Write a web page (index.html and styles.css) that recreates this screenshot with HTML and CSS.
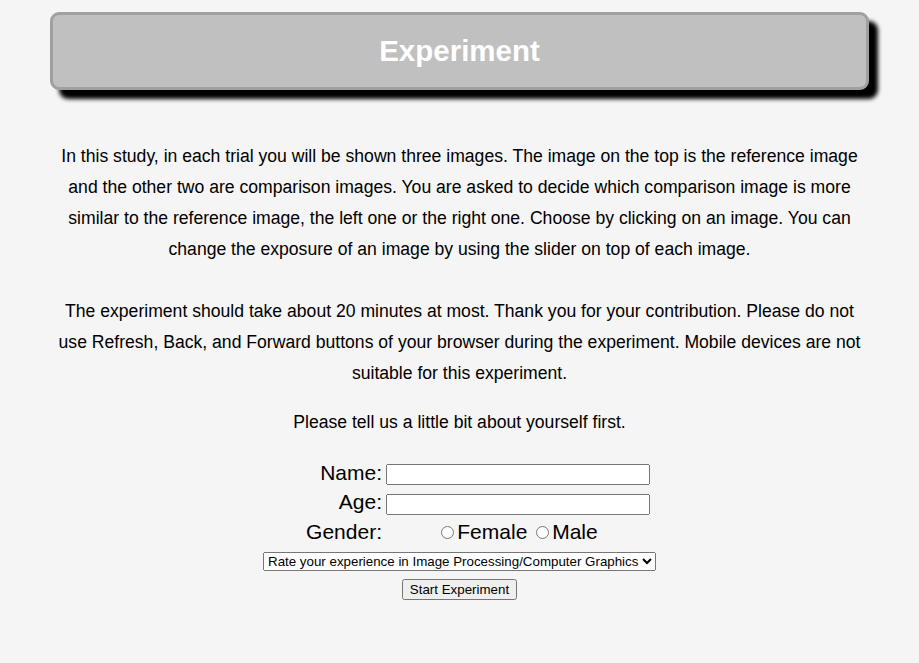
FILE: index.html
```html
<!DOCTYPE html>
<html>
<head>
<meta charset="utf-8">
<link rel="stylesheet" href="styles.css">
</head>
<body>
<div class="header"><h1 class="title">Experiment</h1></div>
<div class="content">
<p class="intro">In this study, in each trial you will be shown three images. The image on the top is the reference image and the other two are comparison images. You are asked to decide which comparison image is more similar to the reference image, the left one or the right one. Choose by clicking on an image. You can change the exposure of an image by using the slider on top of each image.<br><br>The experiment should take about 20 minutes at most. Thank you for your contribution. Please do not use Refresh, Back, and Forward buttons of your browser during the experiment. Mobile devices are not suitable for this experiment.</p>
<p class="ask">Please tell us a little bit about yourself first.</p>
<table class="form">
<tr><td class="lbl">Name:</td><td class="fld"><input type="text" class="txt"></td></tr>
<tr><td class="lbl">Age:</td><td class="fld"><input type="text" class="txt"></td></tr>
<tr><td class="lbl">Gender:</td><td class="fld center"><input type="radio" name="g" class="rad">Female <input type="radio" name="g" class="rad">Male</td></tr>
</table>
<div class="selrow"><select class="sel"><option>Rate your experience in Image Processing/Computer Graphics</option></select></div>
<div class="btnrow"><button class="btn">Start Experiment</button></div>
</div>
</body>
</html>
```
FILE: styles.css
```css
body {
  margin: 8px;
  background: #f5f5f5;
  font-family: "Liberation Sans", Arial, sans-serif;
  color: #000;
}
.header {
  width: 90%;
  margin: 4px auto 0;
  height: 72px;
  background: #c0c0c0;
  border: 3px solid #a0a0a0;
  border-radius: 9px;
  box-shadow: 9px 9px 4px #000;
  display: flex;
  align-items: center;
  justify-content: center;
}
.title {
  margin: 0;
  color: #fff;
  font-size: 29.5px;
  font-weight: bold;
}
.content {
  text-align: center;
  padding-top: 33px;
}
.intro {
  width: 90%;
  margin: 18px auto 0;
  font-size: 17.6px;
  line-height: 31px;
}
.ask {
  margin: 18px 0 0;
  font-size: 17.6px;
  line-height: 31px;
}
.form {
  margin: 19px auto 0;
  border-spacing: 2px;
  font-size: 21px;
}
.form td { padding: 1px; height: 25.5px; }
.form td.lbl { width: 113px; text-align: right; }
.fld { text-align: left; }
.center { text-align: center; line-height: 22px; }
.txt {
  width: 256px;
  height: 15px;
  margin: 0;
  font-size: 13px;
}
.rad { margin: 3px 3px 0 3px; width: 13px; height: 13px; }
.selrow { margin-top: 4px; }
.sel { font-family: "Liberation Sans", Arial, sans-serif; font-size: 13.33px; }
.btnrow { margin-top: 8px; }
.btn { font-family: "Liberation Sans", Arial, sans-serif; font-size: 13.33px; }
```
